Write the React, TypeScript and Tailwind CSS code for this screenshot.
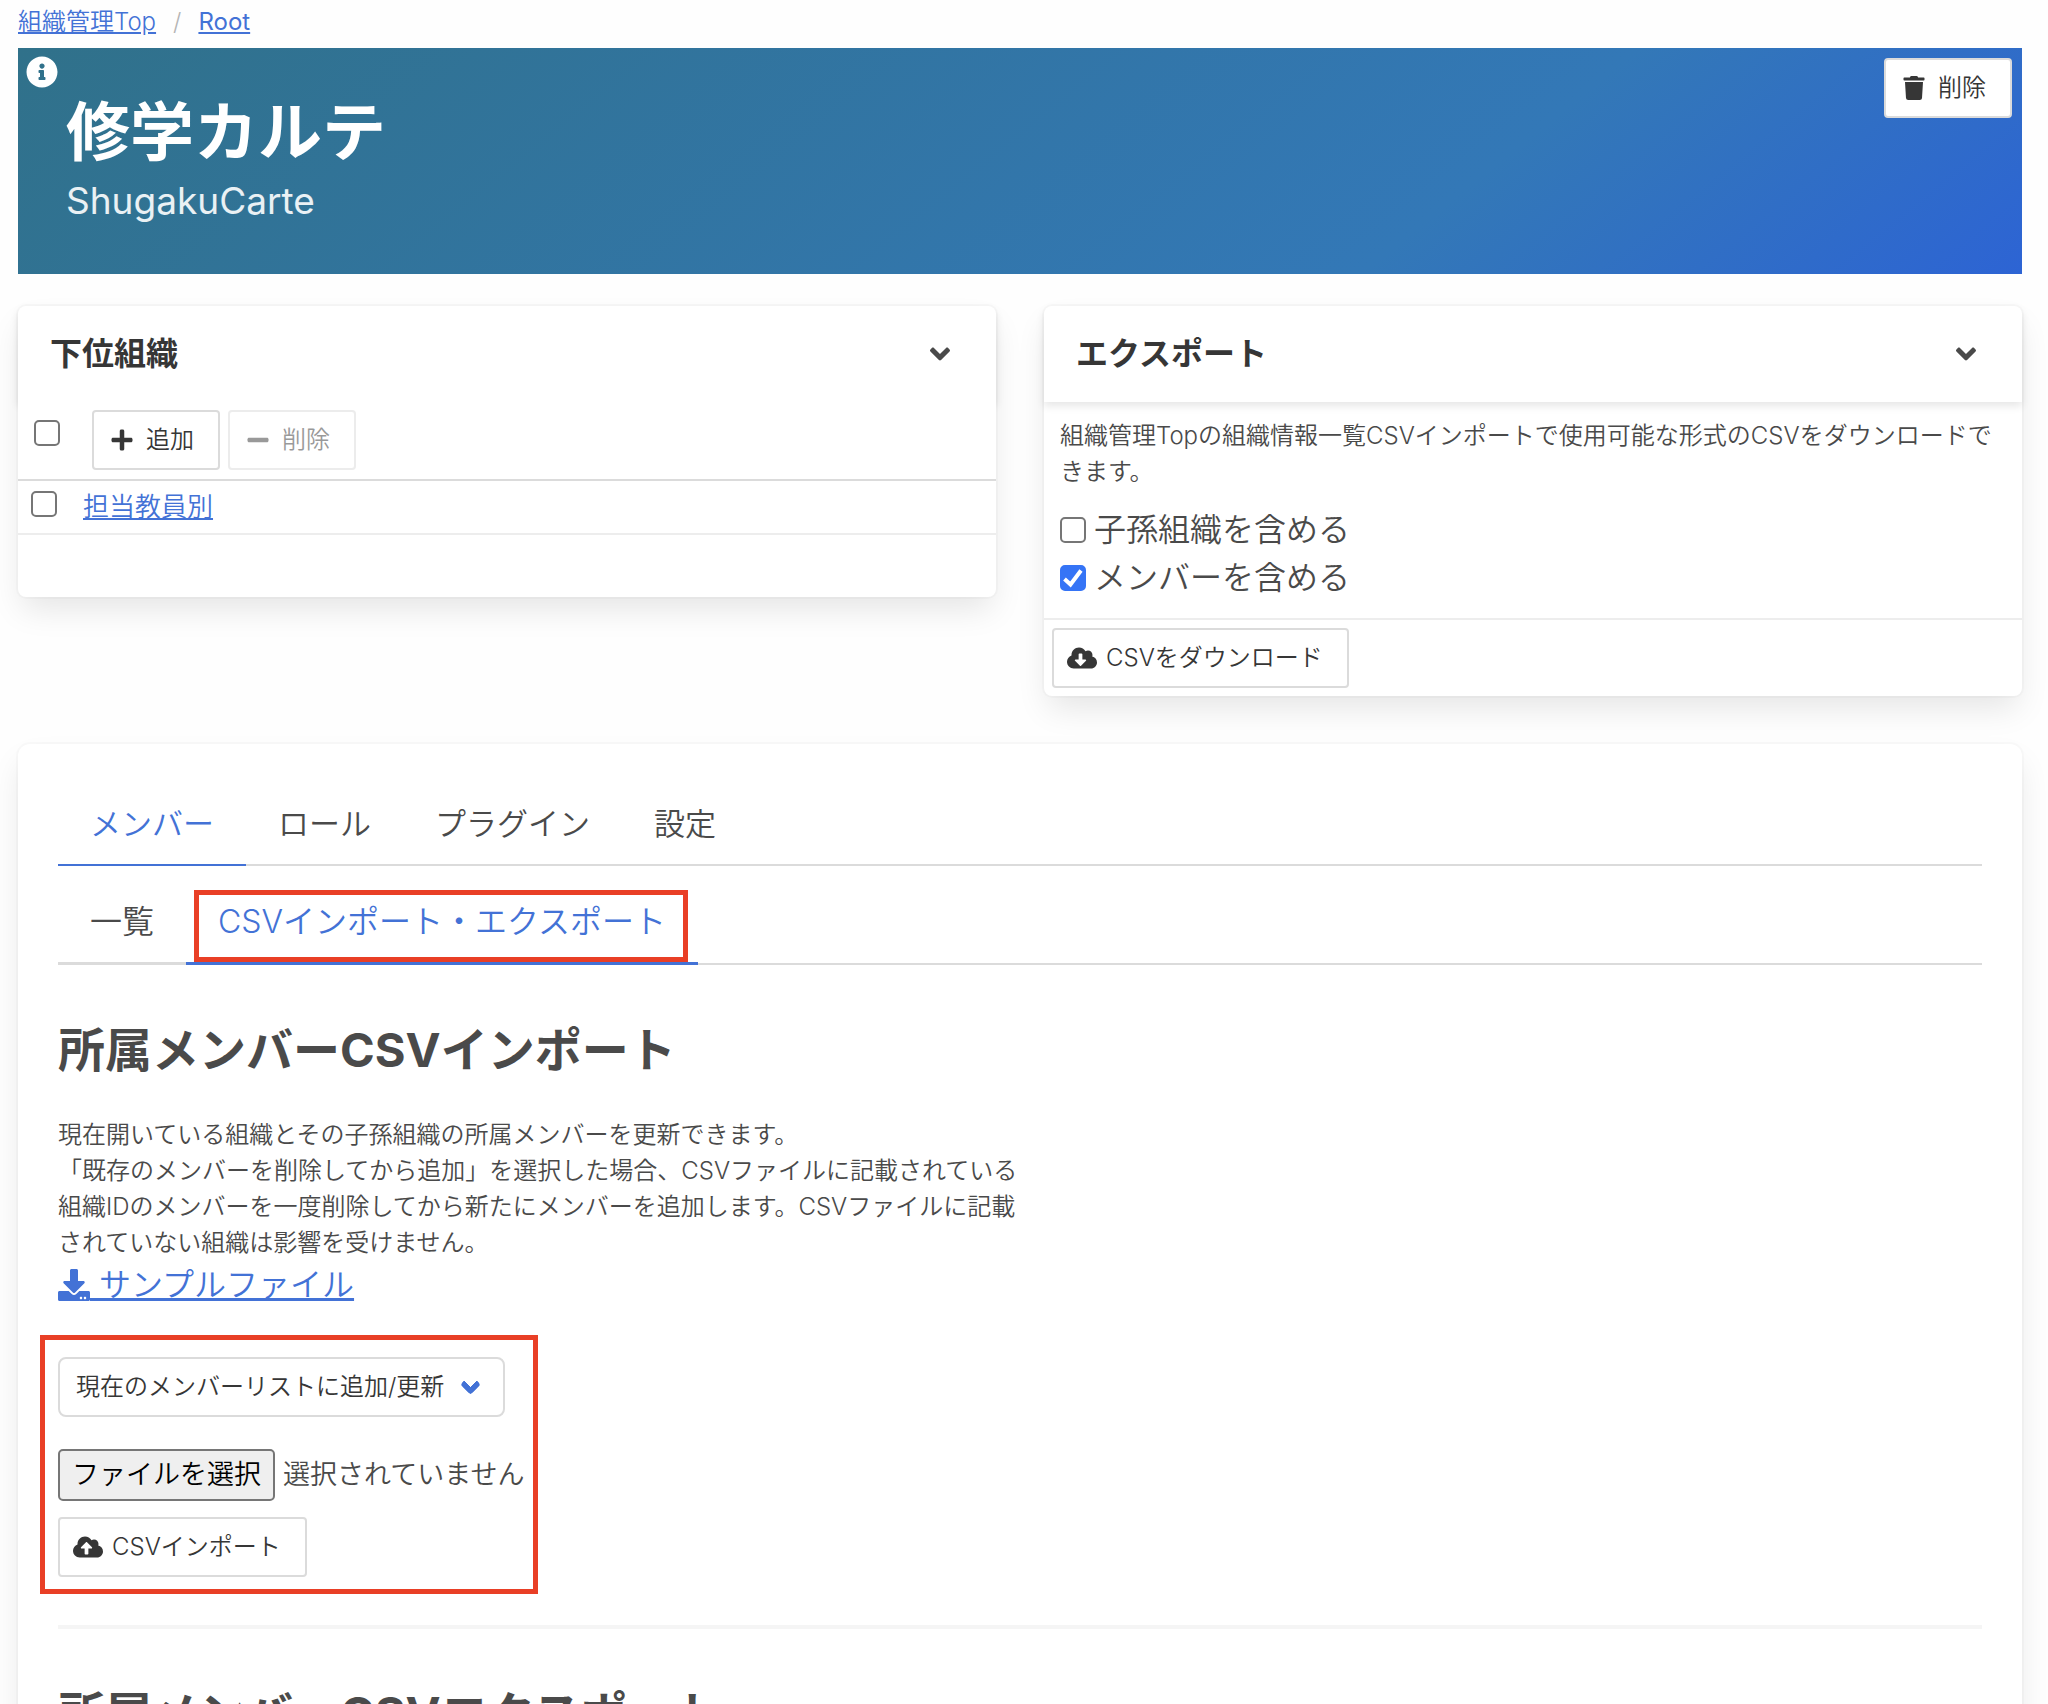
import type { ReactNode } from "react";
import {
  FaAngleDown,
  FaCloudDownloadAlt,
  FaCloudUploadAlt,
  FaDownload,
  FaInfoCircle,
  FaMinus,
  FaPlus,
  FaTrash,
} from "react-icons/fa";

const cardShadow =
  "shadow-[0_16px_32px_-4px_rgba(10,10,10,0.1),0_0_0_2px_rgba(10,10,10,0.02)]";

function Checkbox({ id, label, checked }: { id: string; label?: string; checked?: boolean }) {
  return (
    <span className="relative inline-flex size-[26px] shrink-0">
      <input
        id={id}
        type="checkbox"
        aria-label={label}
        defaultChecked={checked}
        className="peer size-[26px] appearance-none rounded-[5px] border-2 border-[#767676] bg-white checked:border-[#3574f6] checked:bg-[#3574f6]"
      />
      <svg
        viewBox="0 0 26 26"
        className="pointer-events-none absolute inset-0 hidden size-[26px] peer-checked:block"
        fill="none"
        stroke="white"
        strokeWidth="4"
      >
        <path d="M4.5 14 L10.5 19.5 L21 5.5" />
      </svg>
    </span>
  );
}

function Button({
  icon,
  children,
  disabled,
}: {
  icon: ReactNode;
  children: ReactNode;
  disabled?: boolean;
}) {
  return (
    <button
      type="button"
      disabled={disabled}
      className="flex h-[60px] items-center gap-1.5 rounded border-2 border-[#dbdbdb] bg-white pr-6 pl-2.5 text-2xl text-[#363636] disabled:opacity-50"
    >
      <span className="flex w-9 justify-center">{icon}</span>
      <span>{children}</span>
    </button>
  );
}

function CardHeader({ title }: { title: string }) {
  return (
    <header className="flex h-24 items-center justify-between rounded-t-lg px-8 shadow-[0_4px_8px_rgba(10,10,10,0.1)]">
      <h2 className="text-[32px] leading-12 font-bold text-[#363636]">{title}</h2>
      <button type="button" aria-label={`${title}を開閉`} className="flex w-12 justify-center">
        <FaAngleDown className="size-8" />
      </button>
    </header>
  );
}

function Tab({ children, active }: { children: ReactNode; active?: boolean }) {
  return (
    <a
      href="#"
      aria-current={active ? "page" : undefined}
      className={
        active
          ? "-mb-0.5 border-b-2 border-[#4372d6] px-8 py-4 text-[#4372d6]"
          : "-mb-0.5 border-b-2 border-[#dbdbdb] px-8 py-4"
      }
    >
      {children}
    </a>
  );
}

export default function App() {
  return (
    <div className="min-h-screen bg-[#fefefe] pt-1 pr-[26px] pl-[18px] font-['Inter','Noto_Sans_CJK_JP',sans-serif] text-[32px] leading-12 font-[350] text-[#4a4a4a]">
      <nav aria-label="breadcrumb" className="mb-2 flex text-2xl leading-9">
        <a href="#" className="text-[#4372d6] underline">
          組織管理Top
        </a>
        <span className="px-[17px] text-[#b5b5b5]">/</span>
        <a href="#" className="font-normal text-[#4372d6] underline">
          Root
        </a>
      </nav>

      <section className="relative bg-[linear-gradient(141deg,#30718a_0%,#3378b7_71%,#2d64d4_100%)] p-12 text-white">
        <button type="button" aria-label="情報" className="absolute top-2 left-2">
          <FaInfoCircle className="size-8" />
        </button>
        <h1 className="text-[64px] leading-[72px] font-bold">修学カルテ</h1>
        <p className="mt-2 text-[37px] leading-[50px] font-normal text-white/90">ShugakuCarte</p>
        <div className="absolute top-2.5 right-2.5">
          <Button icon={<FaTrash />}>削除</Button>
        </div>
      </section>

      <div className="mt-8 grid grid-cols-2 items-start gap-12">
        <section className={`rounded-lg bg-white ${cardShadow}`}>
          <CardHeader title="下位組織" />
          <table className="relative w-full border-collapse bg-white">
            <thead>
              <tr className="h-[78px] border-b-2 border-[#dbdbdb]">
                <th className="w-[65px] pl-4 text-left align-top">
                  <span className="flex pt-[18px]">
                    <Checkbox id="all" label="すべて選択" />
                  </span>
                </th>
                <th className="pt-2 pb-2 pl-[9px] align-top font-[350]">
                  <div className="flex gap-2">
                    <Button icon={<FaPlus />}>追加</Button>
                    <Button icon={<FaMinus />} disabled>
                      削除
                    </Button>
                  </div>
                </th>
              </tr>
            </thead>
            <tbody>
              <tr className="h-[54px] border-b-2 border-[#ededed]">
                <td className="pl-[13px] align-top">
                  <span className="flex pt-2.5">
                    <Checkbox id="row-1" label="担当教員別を選択" />
                  </span>
                </td>
                <td className="text-[26px] leading-10">
                  <a href="#" className="text-[#4372d6] underline">
                    担当教員別
                  </a>
                </td>
              </tr>
            </tbody>
          </table>
          <div className="h-[62px]" />
        </section>

        <section className={`rounded-lg bg-white ${cardShadow}`}>
          <CardHeader title="エクスポート" />
          <div className="border-b-2 border-[#ededed] p-4">
            <p className="text-2xl leading-9">
              組織管理Topの組織情報一覧CSVインポートで使用可能な形式のCSVをダウンロードできます。
            </p>
            <div className="mt-4 flex items-center gap-2">
              <Checkbox id="descendants" />
              <label htmlFor="descendants">子孫組織を含める</label>
            </div>
            <div className="flex items-center gap-2">
              <Checkbox id="members" checked />
              <label htmlFor="members">メンバーを含める</label>
            </div>
          </div>
          <div className="flex p-2">
            <Button icon={<FaCloudDownloadAlt className="size-[30px]" />}>CSVをダウンロード</Button>
          </div>
        </section>
      </div>

      <main className={`mt-12 rounded-xl bg-white p-10 ${cardShadow}`}>
        <nav aria-label="組織" className="flex border-b-2 border-[#dbdbdb] text-[31px]">
          <Tab active>メンバー</Tab>
          <Tab>ロール</Tab>
          <Tab>プラグイン</Tab>
          <Tab>設定</Tab>
        </nav>
        <nav aria-label="メンバー" className="mt-4 flex border-b-2 border-[#dbdbdb]">
          <a href="#" className="-mb-0.5 border-b-3 border-[#dbdbdb] px-8 py-4">
            一覧
          </a>
          <a
            href="#"
            aria-current="page"
            className="relative -mb-0.5 border-b-3 border-[#4372d6] px-8 py-4 text-[#4372d6]"
          >
            CSVインポート・エクスポート
            <span className="pointer-events-none absolute top-2 right-2.5 bottom-0 left-2 border-5 border-[#e93f26]" />
          </a>
        </nav>

        <h3 className="mt-[58px] text-[47px] leading-[54px] font-bold">所属メンバーCSVインポート</h3>
        <div className="mt-10 w-1/2">
          <p className="text-2xl leading-9">
            現在開いている組織とその子孫組織の所属メンバーを更新できます。
            <br />
            「既存のメンバーを削除してから追加」を選択した場合、CSVファイルに記載されている組織IDのメンバーを一度削除してから新たにメンバーを追加します。CSVファイルに記載されていない組織は影響を受けません。
          </p>
          <a href="#" className="flex w-fit items-center text-[#4372d6]">
            <FaDownload className="size-8" />
            <span className="whitespace-pre underline">{" サンプルファイル"}</span>
          </a>
        </div>

        <form className="relative mt-12 flex w-fit flex-col items-start">
          <span className="pointer-events-none absolute -top-[22px] -right-3.5 -bottom-[17px] -left-[18px] border-5 border-[#e93f26]" />
          <div className="relative">
            <select
              aria-label="更新方法"
              className="h-[60px] w-[447px] appearance-none rounded-lg border-2 border-[#dbdbdb] bg-white pr-14 pl-4 text-2xl text-[#363636]"
            >
              <option>現在のメンバーリストに追加/更新</option>
              <option>既存のメンバーを削除してから追加</option>
            </select>
            <span className="pointer-events-none absolute top-5 right-[27px] size-[15px] -rotate-45 rounded-[4px] border-b-6 border-l-6 border-[#4372d6]" />
          </div>
          <div className="mt-8 flex items-center gap-2 text-[27px]">
            <input id="csv-file" type="file" className="sr-only" />
            <label
              htmlFor="csv-file"
              className="flex h-[52px] items-center rounded-[5px] border-2 border-[#767676] bg-[#efefef] px-3 text-black"
            >
              ファイルを選択
            </label>
            <span>選択されていません</span>
          </div>
          <div className="mt-4">
            <Button icon={<FaCloudUploadAlt className="size-[30px]" />}>CSVインポート</Button>
          </div>
        </form>

        <hr className="mt-12 h-1 border-0 bg-[#f5f5f5]" />
        <h3 className="mt-[58px] text-[47px] leading-[54px] font-bold">所属メンバーCSVエクスポート</h3>
      </main>
    </div>
  );
}
